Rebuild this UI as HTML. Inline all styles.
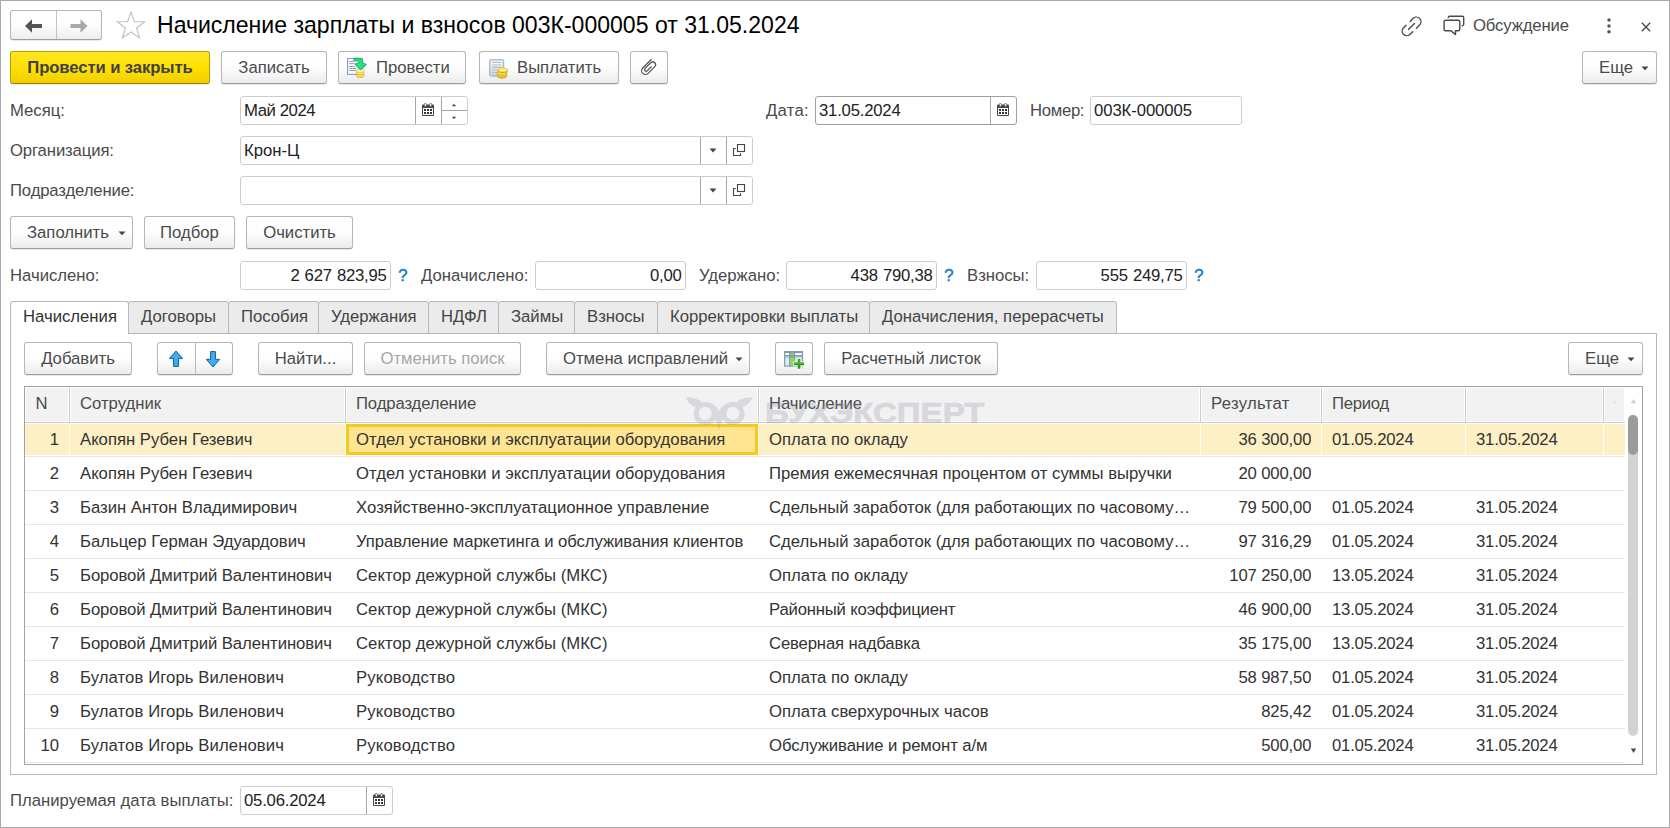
<!DOCTYPE html>
<html lang="ru">
<head>
<meta charset="utf-8">
<title>Начисление зарплаты и взносов</title>
<style>
*{box-sizing:border-box;margin:0;padding:0}
html,body{width:1670px;height:828px;overflow:hidden;background:#fff}
body{font-family:"Liberation Sans",sans-serif;font-size:16.7px;color:#333;position:relative}
.abs{position:absolute}
#frame{position:absolute;left:0;top:0;width:1670px;height:828px;border-top:1px solid #a9a9a9;border-left:1px solid #a9a9a9;border-bottom:1px solid #a9a9a9;border-right:1px solid #a9a9a9;pointer-events:none;z-index:50}
.t{position:absolute;white-space:nowrap;line-height:20px}
.lbl{color:#4a4a4a}
.btn{position:absolute;height:33px;border:1px solid #b6b6b6;border-bottom-color:#9e9e9e;border-radius:3px;background:linear-gradient(#ffffff 0%,#fefefe 48%,#ececec 100%);box-shadow:0 1px 1px rgba(0,0,0,.10);color:#4a4a4a;white-space:nowrap;line-height:31px;text-align:center}
.btn.y{background:linear-gradient(#ffe824 0%,#ffe000 50%,#efd000 100%);border-color:#b59d00;border-bottom-color:#9c8600;font-weight:bold;color:#3f3f4c;letter-spacing:-0.1px}
.btn.dis{color:#a6a6a6}
.fld{position:absolute;height:29px;border:1px solid #cdcdcd;border-radius:3px;background:#fff;line-height:27px;color:#222;white-space:nowrap}
.dv{position:absolute;top:0;width:1px;height:27px;background:#a6a6a6}
.q{position:absolute;color:#0d7bc6;line-height:20px;-webkit-text-stroke:0.45px #0d7bc6;white-space:nowrap}
.tab{position:absolute;top:301px;height:33px;border:1px solid #b8b8b8;background:#ebebeb;color:#444;line-height:29px;white-space:nowrap;border-radius:3px 3px 0 0}
.tab span{position:absolute;left:12px;top:0}
.tab.a{background:#fff;border-bottom:none;z-index:3;color:#333}
.hd{position:absolute;top:1px;height:33px;line-height:31px;color:#4a4a4a;white-space:nowrap;background:#f2f2f2}
.hd span{position:absolute;left:10px;top:0}
.row{position:absolute;left:0;width:1600px;height:34px;border-bottom:1px solid #e6e6e6;background:#fff}
.c{position:absolute;top:0;height:33px;line-height:33px;white-space:nowrap;overflow:hidden;color:#333}
</style>
</head>
<body>
<div id="frame"></div>
<div class="abs" style="left:10px;top:10px;width:92px;height:30px;border:1px solid #b6b6b6;border-bottom-color:#9e9e9e;border-radius:3px;background:linear-gradient(#fff 0%,#fcfcfc 50%,#eeeeee 100%);box-shadow:0 1px 1px rgba(0,0,0,.10)">
<div class="abs" style="left:45px;top:0;width:1px;height:28px;background:#c4c4c4"></div>
<svg class="abs" style="left:14px;top:7.5px" width="18" height="14" viewBox="0 0 18 14"><path d="M0 7 L7 0.3 L7 5 L17 5 L17 9 L7 9 L7 13.7 Z" fill="#555"/></svg>
<svg class="abs" style="left:59px;top:7.5px" width="18" height="14" viewBox="0 0 18 14"><path d="M17.5 7 L10.5 0.3 L10.5 5 L0.5 5 L0.5 9 L10.5 9 L10.5 13.7 Z" fill="#a9a9a9"/></svg>
</div>
<svg class="abs" style="left:114.5px;top:10px" width="32" height="30" viewBox="0 0 32 30"><path d="M16 2 L19.4 11.6 L29.8 11.8 L21.5 18 L24.6 28 L16 22 L7.4 28 L10.5 18 L2.2 11.8 L12.6 11.6 Z" fill="none" stroke="#b9c3cb" stroke-width="1.1" stroke-linejoin="miter"/></svg>
<div class="t" style="left:157px;top:11px;font-size:23.05px;line-height:28px;color:#000">Начисление зарплаты и взносов 003К-000005 от 31.05.2024</div>
<svg class="abs" style="left:1400px;top:15px" width="24" height="24" viewBox="0 0 24 24" fill="none" stroke="#4a4a4a" stroke-width="1.4" stroke-linecap="round"><path d="M10.2 6.5 L13.25 3.35 A4.6 4.6 0 0 1 19.75 9.85 L16.45 13.15"/><path d="M6.1 10.2 L3.35 12.95 A4.6 4.6 0 0 0 9.85 19.45 L12.65 16.65"/><path d="M8.6 14.3 L14.5 8.4"/></svg>
<svg class="abs" style="left:1442px;top:14px" width="24" height="24" viewBox="0 0 24 24" fill="none" stroke="#4a4a4a" stroke-width="1.4" stroke-linejoin="round" stroke-linecap="round"><path d="M6.2 3.6 Q6.2 2.2 7.6 2.2 H20.3 Q21.7 2.2 21.7 3.6 V10.3 Q21.7 11.7 20.2 11.7"/><path d="M3.6 6.3 H16.3 Q17.8 6.3 17.8 7.8 V15.3 Q17.8 16.8 16.3 16.8 H13.5 V20.6 L9.1 16.8 H3.6 Q2.1 16.8 2.1 15.3 V7.8 Q2.1 6.3 3.6 6.3 Z"/></svg>
<div class="t" style="left:1473px;top:16px;color:#4a4a4a;letter-spacing:-0.14px">Обсуждение</div>
<svg class="abs" style="left:1604.6px;top:17px" width="8" height="18" viewBox="0 0 8 18"><circle cx="4" cy="3" r="1.75" fill="#555"/><circle cx="4" cy="8.9" r="1.75" fill="#555"/><circle cx="4" cy="14.8" r="1.75" fill="#555"/></svg>
<svg class="abs" style="left:1640.4px;top:20.7px" width="12" height="12" viewBox="0 0 12 12" stroke="#444" stroke-width="1.25" fill="none"><path d="M1.8 1.8 L10.2 10.2 M10.2 1.8 L1.8 10.2"/></svg>
<div class="btn y" style="left:10px;top:51px;width:200px">Провести и закрыть</div>
<div class="btn " style="left:221px;top:51px;width:106px">Записать</div>
<div class="btn " style="left:338px;top:51px;width:128px"><span class="abs" style="left:37px;top:0;">Провести</span><svg class="abs" style="left:7px;top:5px" width="22" height="23" viewBox="0 0 22 23">
<rect x="1.6" y="1.4" width="14.8" height="16" fill="#fbfcfe" stroke="#8c9dba" stroke-width="1.1"/>
<path d="M3.2 4.4 H8.6 M3.2 6.6 H8.8 M3.2 9.5 H9 M3.2 11.5 H10 M3.2 13.5 H10" stroke="#8f9db6" stroke-width="1"/>
<path d="M8 1.3 H12.2 Q16.8 1.6 17.2 6.4 L20.3 7.3 L14.5 12.9 L9 7.1 L13.2 6 Q13 4.2 11.2 3.9 L8 3.7 Z" fill="#21e389" stroke="#12a455" stroke-width=".9" stroke-linejoin="round"/>
<path d="M10.1 18.6 V13.4 H18.1 V18.6 Q18.1 20.8 14.1 20.8 Q10.1 20.8 10.1 18.6 Z" fill="#e6bd2c"/>
<ellipse cx="14.1" cy="18.4" rx="4" ry="1.9" fill="#f7e968" stroke="#d2a522" stroke-width=".6"/>
<ellipse cx="14.1" cy="15.9" rx="4" ry="1.9" fill="#f7e968" stroke="#d2a522" stroke-width=".6"/>
<ellipse cx="14.1" cy="13.5" rx="4" ry="1.9" fill="#fdf6c4" stroke="#d9b338" stroke-width=".6"/>
<path d="M9 7.1 L14.5 12.9 L20.3 7.3" fill="#21e389" stroke="#12a455" stroke-width=".9" stroke-linejoin="round"/>
</svg></div>
<div class="btn " style="left:479px;top:51px;width:140px"><span class="abs" style="left:37px;top:0;">Выплатить</span><svg class="abs" style="left:7px;top:6px" width="23" height="23" viewBox="0 0 23 23">
<defs><linearGradient id="gd" x1="0" y1="0" x2="0" y2="1"><stop offset="0" stop-color="#ffffff"/><stop offset="1" stop-color="#c3d3e1"/></linearGradient></defs>
<rect x="2.8" y="1.8" width="13.7" height="16.3" rx="1.6" fill="url(#gd)" stroke="#a9bdce" stroke-width="1.5"/>
<path d="M5.2 4.4 H14.3 M5.2 7 H14.3 M5.2 9.4 H14.3 M5.2 12 H12 M5.2 14.5 H11" stroke="#b4c0cc" stroke-width="1.1"/>
<path d="M10 15 V18 Q10 20.4 15 20.4 Q20 20.4 20 18 V15 Z" fill="#dca21e"/>
<ellipse cx="15" cy="17.6" rx="5" ry="2.2" fill="#f0c838" stroke="#d39a1a" stroke-width=".6"/>
<ellipse cx="15" cy="15.1" rx="5" ry="2.2" fill="#f6d950" stroke="#d39a1a" stroke-width=".6"/>
<path d="M10.9 12 V13 Q10.9 15 15.9 15 Q20.9 15 20.9 13 V12 Z" fill="#e0a822"/>
<ellipse cx="15.9" cy="12" rx="5" ry="2.1" fill="#fbe96a" stroke="#dba822" stroke-width=".6"/>
<ellipse cx="15.5" cy="11.8" rx="2.8" ry="1" fill="#fdf88e"/>
</svg></div>
<div class="btn " style="left:630px;top:51px;width:38px"><svg class="abs" style="left:8px;top:5px" width="20" height="20" viewBox="0 0 20 20" fill="none" stroke="#555" stroke-width="1.3" stroke-linecap="round" stroke-linejoin="round"><path transform="translate(0.45,0.15) scale(0.95)" d="M12.3 2.5 L3.47 11.37 A4 4 0 0 0 9.13 17.03 L16.41 9.75 A3 3 0 0 0 12.18 5.58 L5.8 11.96 A1.7 1.7 0 0 0 8.2 14.36 L12.6 9.96"/></svg></div>
<div class="btn " style="left:1582px;top:51px;width:75px"><span class="abs" style="left:16px;top:0;">Еще</span><svg class="abs" style="left:58px;top:14px" width="8" height="5" viewBox="0 0 8 5"><path d="M0.5 0.5 H7.5 L4 4.3 Z" fill="#444"/></svg></div>
<div class="t lbl" style="left:10px;top:101px;">Месяц:</div>
<div class="fld" style="left:240px;top:96px;width:228px"><span class="abs" style="left:3px;top:0;letter-spacing:-0.4px">Май 2024</span><div class="dv" style="left:174px"></div><svg class="abs" style="left:181px;top:6px" width="12" height="14" viewBox="0 0 12 14"><path d="M1.3 1.6 H10.7 Q12 1.6 12 2.9 V11.7 Q12 13 10.7 13 H1.3 Q0 13 0 11.7 V2.9 Q0 1.6 1.3 1.6 Z" fill="#454545"/><rect x="1" y="5" width="10" height="7" fill="#fff"/><rect x="2.35" y="0.35" width="2" height="3.4" rx="1" fill="#fff" stroke="#454545" stroke-width=".7"/><rect x="7.65" y="0.35" width="2" height="3.4" rx="1" fill="#fff" stroke="#454545" stroke-width=".7"/><g fill="#333"><rect x="2" y="6" width="2" height="2"/><rect x="5" y="6" width="2" height="2"/><rect x="8" y="6" width="2" height="2"/><rect x="2" y="9" width="2" height="2"/><rect x="5" y="9" width="2" height="2"/><rect x="8" y="9" width="2" height="2"/></g></svg><div class="dv" style="left:200px"></div><div class="abs" style="left:201px;top:13px;width:25px;height:1px;background:#a6a6a6"></div><svg class="abs" style="left:210px;top:5.6px" width="6" height="4" viewBox="0 0 6 4"><path d="M0.9 3.2 L3 0.7 L5.1 3.2 Z" fill="#444"/></svg><svg class="abs" style="left:210px;top:19px" width="6" height="4" viewBox="0 0 6 4"><path d="M0.9 0.7 L3 3.2 L5.1 0.7 Z" fill="#444"/></svg></div>
<div class="t lbl" style="left:766px;top:101px;letter-spacing:0.24px">Дата:</div>
<div class="fld" style="left:815px;top:96px;width:202px;border-color:#a0a0a0"><span class="abs" style="left:3px;top:0;letter-spacing:-0.2px">31.05.2024</span><div class="dv" style="left:174px"></div><svg class="abs" style="left:181px;top:6px" width="12" height="14" viewBox="0 0 12 14"><path d="M1.3 1.6 H10.7 Q12 1.6 12 2.9 V11.7 Q12 13 10.7 13 H1.3 Q0 13 0 11.7 V2.9 Q0 1.6 1.3 1.6 Z" fill="#454545"/><rect x="1" y="5" width="10" height="7" fill="#fff"/><rect x="2.35" y="0.35" width="2" height="3.4" rx="1" fill="#fff" stroke="#454545" stroke-width=".7"/><rect x="7.65" y="0.35" width="2" height="3.4" rx="1" fill="#fff" stroke="#454545" stroke-width=".7"/><g fill="#333"><rect x="2" y="6" width="2" height="2"/><rect x="5" y="6" width="2" height="2"/><rect x="8" y="6" width="2" height="2"/><rect x="2" y="9" width="2" height="2"/><rect x="5" y="9" width="2" height="2"/><rect x="8" y="9" width="2" height="2"/></g></svg></div>
<div class="t lbl" style="left:1030px;top:101px;letter-spacing:-0.3px">Номер:</div>
<div class="fld" style="left:1090px;top:96px;width:152px"><span class="abs" style="left:3px;top:0;letter-spacing:-0.08px">003К-000005</span></div>
<div class="t lbl" style="left:10px;top:141px;letter-spacing:-0.12px">Организация:</div>
<div class="fld" style="left:240px;top:136px;width:513px"><span class="abs" style="left:3px;top:0;">Крон-Ц</span><div class="dv" style="left:459px"></div><svg class="abs" style="left:468px;top:11px" width="8" height="5" viewBox="0 0 8 5"><path d="M0.6 0.4 H7.4 L4 4.6 Z" fill="#444"/></svg><div class="dv" style="left:485px"></div><svg class="abs" style="left:491px;top:7px" width="14" height="14" viewBox="0 0 14 14" fill="none" stroke="#454545" stroke-width="1.15"><rect x="5.5" y="0.5" width="7" height="7"/><path d="M3.8 4.5 H1.5 V11.5 H8.5 V9.2"/></svg></div>
<div class="t lbl" style="left:10px;top:181px;letter-spacing:-0.14px">Подразделение:</div>
<div class="fld" style="left:240px;top:176px;width:513px"><div class="dv" style="left:459px"></div><svg class="abs" style="left:468px;top:11px" width="8" height="5" viewBox="0 0 8 5"><path d="M0.6 0.4 H7.4 L4 4.6 Z" fill="#444"/></svg><div class="dv" style="left:485px"></div><svg class="abs" style="left:491px;top:7px" width="14" height="14" viewBox="0 0 14 14" fill="none" stroke="#454545" stroke-width="1.15"><rect x="5.5" y="0.5" width="7" height="7"/><path d="M3.8 4.5 H1.5 V11.5 H8.5 V9.2"/></svg></div>
<div class="btn " style="left:10px;top:216px;width:123px"><span class="abs" style="left:16px;top:0;">Заполнить</span><svg class="abs" style="left:107px;top:14px" width="8" height="5" viewBox="0 0 8 5"><path d="M0.5 0.5 H7.5 L4 4.3 Z" fill="#444"/></svg></div>
<div class="btn " style="left:144px;top:216px;width:91px">Подбор</div>
<div class="btn " style="left:246px;top:216px;width:107px">Очистить</div>
<div class="t lbl" style="left:10px;top:266px;">Начислено:</div>
<div class="fld" style="left:240px;top:261px;width:151px"><span class="abs" style="right:3.4px;top:0;letter-spacing:-0.22px;word-spacing:0.7px">2 627 823,95</span></div>
<div class="q" style="left:398.2px;top:266px;">?</div>
<div class="t lbl" style="left:421px;top:266px;">Доначислено:</div>
<div class="fld" style="left:535px;top:261px;width:151px"><span class="abs" style="right:3.4px;top:0;letter-spacing:-0.22px;word-spacing:0.7px">0,00</span></div>
<div class="t lbl" style="left:699px;top:266px;">Удержано:</div>
<div class="fld" style="left:786px;top:261px;width:151px"><span class="abs" style="right:3.4px;top:0;letter-spacing:-0.22px;word-spacing:0.7px">438 790,38</span></div>
<div class="q" style="left:944.2px;top:266px;">?</div>
<div class="t lbl" style="left:967px;top:266px;">Взносы:</div>
<div class="fld" style="left:1036px;top:261px;width:151px"><span class="abs" style="right:3.4px;top:0;letter-spacing:-0.22px;word-spacing:0.7px">555 249,75</span></div>
<div class="q" style="left:1194.2px;top:266px;">?</div>
<div class="abs" style="left:10px;top:333px;width:1647px;height:442px;border:1px solid #b8b8b8;background:#fff"></div>
<div class="tab a" style="left:10px;width:119px"><span>Начисления</span></div>
<div class="tab" style="left:128px;width:101px"><span>Договоры</span></div>
<div class="tab" style="left:228px;width:91px"><span>Пособия</span></div>
<div class="tab" style="left:318px;width:111px"><span>Удержания</span></div>
<div class="tab" style="left:428px;width:71px"><span>НДФЛ</span></div>
<div class="tab" style="left:498px;width:77px"><span>Займы</span></div>
<div class="tab" style="left:574px;width:84px"><span>Взносы</span></div>
<div class="tab" style="left:657px;width:213px"><span>Корректировки выплаты</span></div>
<div class="tab" style="left:869px;width:248px"><span>Доначисления, перерасчеты</span></div>
<div class="abs" style="left:11px;top:333px;width:117px;height:1px;background:#fff;z-index:4"></div>
<div class="btn " style="left:24px;top:342px;width:108px">Добавить</div>
<div class="btn " style="left:157px;top:342px;width:76px"><div class="abs" style="left:37px;top:0;width:1px;height:31px;background:#b8b8b8"></div>
<svg class="abs" style="left:10px;top:7px" width="16" height="18" viewBox="0 0 16 18"><path d="M8 1 L14.6 8.6 H10.4 V16.4 H5.6 V8.6 H1.4 Z" fill="#43acf0" stroke="#0d5f9e" stroke-width="1" stroke-linejoin="round"/></svg>
<svg class="abs" style="left:47px;top:7px" width="16" height="18" viewBox="0 0 16 18"><path d="M8 17 L14.6 9.4 H10.4 V1.6 H5.6 V9.4 H1.4 Z" fill="#43acf0" stroke="#0d5f9e" stroke-width="1" stroke-linejoin="round"/></svg></div>
<div class="btn " style="left:258px;top:342px;width:95px">Найти...</div>
<div class="btn dis" style="left:364px;top:342px;width:157px">Отменить поиск</div>
<div class="btn " style="left:546px;top:342px;width:204px"><span class="abs" style="left:16px;top:0;">Отмена исправлений</span><svg class="abs" style="left:188px;top:14px" width="8" height="5" viewBox="0 0 8 5"><path d="M0.5 0.5 H7.5 L4 4.3 Z" fill="#444"/></svg></div>
<div class="btn " style="left:775px;top:342px;width:38px"><svg class="abs" style="left:8px;top:8px" width="22" height="19" viewBox="0 0 22 19">
<rect x="0" y="0" width="19.1" height="15.7" fill="#8299b2"/>
<rect x="1.2" y="2.1" width="3.8" height="1.9" fill="#fff"/><rect x="6" y="2.1" width="4.2" height="1.9" fill="#8fd060"/><rect x="11.2" y="2.1" width="6.6" height="1.9" fill="#fff"/>
<rect x="1.2" y="5.3" width="3.8" height="1.2" fill="#b9c9da"/><rect x="6" y="5.3" width="4.2" height="1.2" fill="#7fbf58"/><rect x="11.2" y="5.3" width="6.6" height="1.2" fill="#b9c9da"/>
<rect x="1.2" y="6.5" width="3.8" height="8" fill="#e1eaf3"/><rect x="6" y="6.5" width="4.2" height="8" fill="#8fd464"/><rect x="11.2" y="6.5" width="6.6" height="8" fill="#e1eaf3"/>
<path d="M15 7.4 V18.3 M9.3 12.85 H20.7" stroke="#fbfbfb" stroke-width="4.6"/>
<path d="M15 8 V17.7 M9.9 12.85 H20.1" stroke="#2c9a1a" stroke-width="2.7"/>
<path d="M15 8.4 V12 M10.4 12.4 H19.6" stroke="#46b82c" stroke-width="1.3"/>
</svg></div>
<div class="btn " style="left:824px;top:342px;width:174px">Расчетный листок</div>
<div class="btn " style="left:1568px;top:342px;width:75px"><span class="abs" style="left:16px;top:0;">Еще</span><svg class="abs" style="left:58px;top:14px" width="8" height="5" viewBox="0 0 8 5"><path d="M0.5 0.5 H7.5 L4 4.3 Z" fill="#444"/></svg></div>
<div class="abs" style="left:24px;top:386px;width:1619px;height:379px;border:1px solid #a2a2a2;background:#fff;overflow:hidden">
<div class="hd" style="left:1px;width:42px"><span style="left:9.399999999999999px">N</span></div><div class="hd" style="left:46px;width:273px"><span style="left:9px">Сотрудник</span></div><div class="hd" style="left:322px;width:410px"><span style="left:9px;letter-spacing:-0.12px">Подразделение</span></div><div class="hd" style="left:735px;width:439px"><span style="left:9px;letter-spacing:-0.13px">Начисление</span></div><div class="hd" style="left:1177px;width:118px"><span style="left:9px;letter-spacing:0.3px">Результат</span></div><div class="hd" style="left:1298px;width:141px"><span style="left:9px;letter-spacing:-0.27px">Период</span></div><div class="hd" style="left:1442px;width:135px"><span style="left:9px"></span></div><div class="hd" style="left:1580px;width:19px"><span style="left:9px"></span></div><div class="abs" style="left:44px;top:1px;width:1px;height:35px;background:#cdcdcd"></div><div class="abs" style="left:320px;top:1px;width:1px;height:35px;background:#cdcdcd"></div><div class="abs" style="left:733px;top:1px;width:1px;height:35px;background:#cdcdcd"></div><div class="abs" style="left:1175px;top:1px;width:1px;height:35px;background:#cdcdcd"></div><div class="abs" style="left:1296px;top:1px;width:1px;height:35px;background:#cdcdcd"></div><div class="abs" style="left:1440px;top:1px;width:1px;height:35px;background:#cdcdcd"></div><div class="abs" style="left:1578px;top:1px;width:1px;height:35px;background:#cdcdcd"></div><div class="abs" style="left:0;top:35px;width:1600px;height:1px;background:#cdcdcd"></div>
<div class="row" style="top:36px;width:1600px"><div class="abs" style="left:0;top:1px;width:1600px;height:31px;background:#fef0c5"></div><div class="abs" style="left:44px;top:1px;width:1px;height:31px;background:#fffdf6"></div><div class="abs" style="left:320px;top:1px;width:1px;height:31px;background:#fffdf6"></div><div class="abs" style="left:733px;top:1px;width:1px;height:31px;background:#fffdf6"></div><div class="abs" style="left:1175px;top:1px;width:1px;height:31px;background:#fffdf6"></div><div class="abs" style="left:1296px;top:1px;width:1px;height:31px;background:#fffdf6"></div><div class="abs" style="left:1440px;top:1px;width:1px;height:31px;background:#fffdf6"></div><div class="abs" style="left:1578px;top:1px;width:1px;height:31px;background:#fffdf6"></div><div class="abs" style="left:321px;top:1px;width:412px;height:31px;background:#fee591;border:3px solid #f9c81e"></div><div class="c" style="left:0px;width:34px;text-align:right">1</div><div class="c" style="left:55px;width:265px">Акопян Рубен Гезевич</div><div class="c" style="left:331px;width:402px;letter-spacing:0.03px">Отдел установки и эксплуатации оборудования</div><div class="c" style="left:744px;width:431px">Оплата по окладу</div><div class="c" style="left:1175px;width:111.29999999999995px;text-align:right;letter-spacing:-0.15px">36 300,00</div><div class="c" style="left:1307px;width:120px;letter-spacing:-0.2px">01.05.2024</div><div class="c" style="left:1451px;width:120px;letter-spacing:-0.2px">31.05.2024</div></div>
<div class="row" style="top:70px;width:1600px"><div class="c" style="left:0px;width:34px;text-align:right">2</div><div class="c" style="left:55px;width:265px">Акопян Рубен Гезевич</div><div class="c" style="left:331px;width:402px;letter-spacing:0.03px">Отдел установки и эксплуатации оборудования</div><div class="c" style="left:744px;width:431px">Премия ежемесячная процентом от суммы выручки</div><div class="c" style="left:1175px;width:111.29999999999995px;text-align:right;letter-spacing:-0.15px">20 000,00</div><div class="c" style="left:1307px;width:120px;letter-spacing:-0.2px"></div><div class="c" style="left:1451px;width:120px;letter-spacing:-0.2px"></div></div>
<div class="row" style="top:104px;width:1600px"><div class="c" style="left:0px;width:34px;text-align:right">3</div><div class="c" style="left:55px;width:265px">Базин Антон Владимирович</div><div class="c" style="left:331px;width:402px;letter-spacing:0.05px">Хозяйственно-эксплуатационное управление</div><div class="c" style="left:744px;width:431px">Сдельный заработок (для работающих по часовому…</div><div class="c" style="left:1175px;width:111.29999999999995px;text-align:right;letter-spacing:-0.15px">79 500,00</div><div class="c" style="left:1307px;width:120px;letter-spacing:-0.2px">01.05.2024</div><div class="c" style="left:1451px;width:120px;letter-spacing:-0.2px">31.05.2024</div></div>
<div class="row" style="top:138px;width:1600px"><div class="c" style="left:0px;width:34px;text-align:right">4</div><div class="c" style="left:55px;width:265px">Бальцер Герман Эдуардович</div><div class="c" style="left:331px;width:402px;letter-spacing:-0.06px">Управление маркетинга и обслуживания клиентов</div><div class="c" style="left:744px;width:431px">Сдельный заработок (для работающих по часовому…</div><div class="c" style="left:1175px;width:111.29999999999995px;text-align:right;letter-spacing:-0.15px">97 316,29</div><div class="c" style="left:1307px;width:120px;letter-spacing:-0.2px">01.05.2024</div><div class="c" style="left:1451px;width:120px;letter-spacing:-0.2px">31.05.2024</div></div>
<div class="row" style="top:172px;width:1600px"><div class="c" style="left:0px;width:34px;text-align:right">5</div><div class="c" style="left:55px;width:265px;letter-spacing:-0.075px">Боровой Дмитрий Валентинович</div><div class="c" style="left:331px;width:402px;letter-spacing:0.045px">Сектор дежурной службы (МКС)</div><div class="c" style="left:744px;width:431px">Оплата по окладу</div><div class="c" style="left:1175px;width:111.29999999999995px;text-align:right;letter-spacing:-0.15px">107 250,00</div><div class="c" style="left:1307px;width:120px;letter-spacing:-0.2px">13.05.2024</div><div class="c" style="left:1451px;width:120px;letter-spacing:-0.2px">31.05.2024</div></div>
<div class="row" style="top:206px;width:1600px"><div class="c" style="left:0px;width:34px;text-align:right">6</div><div class="c" style="left:55px;width:265px;letter-spacing:-0.075px">Боровой Дмитрий Валентинович</div><div class="c" style="left:331px;width:402px;letter-spacing:0.045px">Сектор дежурной службы (МКС)</div><div class="c" style="left:744px;width:431px;letter-spacing:-0.18px">Районный коэффициент</div><div class="c" style="left:1175px;width:111.29999999999995px;text-align:right;letter-spacing:-0.15px">46 900,00</div><div class="c" style="left:1307px;width:120px;letter-spacing:-0.2px">13.05.2024</div><div class="c" style="left:1451px;width:120px;letter-spacing:-0.2px">31.05.2024</div></div>
<div class="row" style="top:240px;width:1600px"><div class="c" style="left:0px;width:34px;text-align:right">7</div><div class="c" style="left:55px;width:265px;letter-spacing:-0.075px">Боровой Дмитрий Валентинович</div><div class="c" style="left:331px;width:402px;letter-spacing:0.045px">Сектор дежурной службы (МКС)</div><div class="c" style="left:744px;width:431px;letter-spacing:-0.14px">Северная надбавка</div><div class="c" style="left:1175px;width:111.29999999999995px;text-align:right;letter-spacing:-0.15px">35 175,00</div><div class="c" style="left:1307px;width:120px;letter-spacing:-0.2px">13.05.2024</div><div class="c" style="left:1451px;width:120px;letter-spacing:-0.2px">31.05.2024</div></div>
<div class="row" style="top:274px;width:1600px"><div class="c" style="left:0px;width:34px;text-align:right">8</div><div class="c" style="left:55px;width:265px;letter-spacing:0.09px">Булатов Игорь Виленович</div><div class="c" style="left:331px;width:402px;letter-spacing:0.15px">Руководство</div><div class="c" style="left:744px;width:431px">Оплата по окладу</div><div class="c" style="left:1175px;width:111.29999999999995px;text-align:right;letter-spacing:-0.15px">58 987,50</div><div class="c" style="left:1307px;width:120px;letter-spacing:-0.2px">01.05.2024</div><div class="c" style="left:1451px;width:120px;letter-spacing:-0.2px">31.05.2024</div></div>
<div class="row" style="top:308px;width:1600px"><div class="c" style="left:0px;width:34px;text-align:right">9</div><div class="c" style="left:55px;width:265px;letter-spacing:0.09px">Булатов Игорь Виленович</div><div class="c" style="left:331px;width:402px;letter-spacing:0.15px">Руководство</div><div class="c" style="left:744px;width:431px">Оплата сверхурочных часов</div><div class="c" style="left:1175px;width:111.29999999999995px;text-align:right;letter-spacing:-0.15px">825,42</div><div class="c" style="left:1307px;width:120px;letter-spacing:-0.2px">01.05.2024</div><div class="c" style="left:1451px;width:120px;letter-spacing:-0.2px">31.05.2024</div></div>
<div class="row" style="top:342px;width:1600px"><div class="c" style="left:0px;width:34px;text-align:right">10</div><div class="c" style="left:55px;width:265px;letter-spacing:0.09px">Булатов Игорь Виленович</div><div class="c" style="left:331px;width:402px;letter-spacing:0.15px">Руководство</div><div class="c" style="left:744px;width:431px;letter-spacing:-0.06px">Обслуживание и ремонт а/м</div><div class="c" style="left:1175px;width:111.29999999999995px;text-align:right;letter-spacing:-0.15px">500,00</div><div class="c" style="left:1307px;width:120px;letter-spacing:-0.2px">01.05.2024</div><div class="c" style="left:1451px;width:120px;letter-spacing:-0.2px">31.05.2024</div></div>
<div class="abs" style="left:1603px;top:28px;width:10px;height:321px;border-radius:5px;background:#d3d3d3"></div><div class="abs" style="left:1603px;top:28px;width:10px;height:40px;border-radius:5px;background:#9b9b9b"></div><svg class="abs" style="left:1604.5px;top:11px" width="7" height="6" viewBox="0 0 7 6"><path d="M0.8 5.3 L3.5 0.9 L6.2 5.3 Z" fill="#cfcfcf"/></svg><svg class="abs" style="left:1605px;top:360.70000000000005px" width="7" height="6" viewBox="0 0 7 6"><path d="M0.8 0.6 L3.5 5 L6.2 0.6 Z" fill="#4a4a4a"/></svg><div class="abs" style="left:1589px;top:14px;width:1px;height:3px;background:#d8d8d8"></div><svg class="abs" style="left:659px;top:8px" width="72" height="38" viewBox="0 0 72 38"><g fill="rgba(150,150,172,0.29)"><path fill-rule="evenodd" d="M1.3 2.2 Q14 2.4 18 7.4 Q29 5.5 35.1 16 Q41.2 5.5 52.2 7.4 Q56.2 2.4 68.9 2.2 Q64 10.5 58.5 12.2 Q61.2 16.5 60.6 20 A11.9 11.9 0 0 1 38.8 24.5 L35.1 34.9 L31.4 24.5 A11.9 11.9 0 0 1 9.6 20 Q9 16.5 11.7 12.2 Q6.2 10.5 1.3 2.2 Z M21.1 11.7 A6.6 6.6 0 1 0 21.1 24.9 A6.6 6.6 0 1 0 21.1 11.7 Z M48.9 11.7 A6.6 6.6 0 1 0 48.9 24.9 A6.6 6.6 0 1 0 48.9 11.7 Z"/></g></svg><div class="abs" style="left:739.6px;top:5.800000000000011px;font-size:30.2px;font-weight:bold;line-height:40px;letter-spacing:0px;transform:scaleX(1.095);transform-origin:0 0;color:rgb(150,150,172);-webkit-text-stroke:0.7px rgb(150,150,172);opacity:.29;white-space:nowrap">БУХЭКСПЕРТ</div></div>
<div class="t lbl" style="left:10px;top:791px;">Планируемая дата выплаты:</div>
<div class="fld" style="left:240px;top:786px;width:153px"><span class="abs" style="left:3px;top:0;letter-spacing:-0.2px">05.06.2024</span><div class="dv" style="left:125px"></div><svg class="abs" style="left:132px;top:6px" width="12" height="14" viewBox="0 0 12 14"><path d="M1.3 1.6 H10.7 Q12 1.6 12 2.9 V11.7 Q12 13 10.7 13 H1.3 Q0 13 0 11.7 V2.9 Q0 1.6 1.3 1.6 Z" fill="#454545"/><rect x="1" y="5" width="10" height="7" fill="#fff"/><rect x="2.35" y="0.35" width="2" height="3.4" rx="1" fill="#fff" stroke="#454545" stroke-width=".7"/><rect x="7.65" y="0.35" width="2" height="3.4" rx="1" fill="#fff" stroke="#454545" stroke-width=".7"/><g fill="#333"><rect x="2" y="6" width="2" height="2"/><rect x="5" y="6" width="2" height="2"/><rect x="8" y="6" width="2" height="2"/><rect x="2" y="9" width="2" height="2"/><rect x="5" y="9" width="2" height="2"/><rect x="8" y="9" width="2" height="2"/></g></svg></div>
</body>
</html>
